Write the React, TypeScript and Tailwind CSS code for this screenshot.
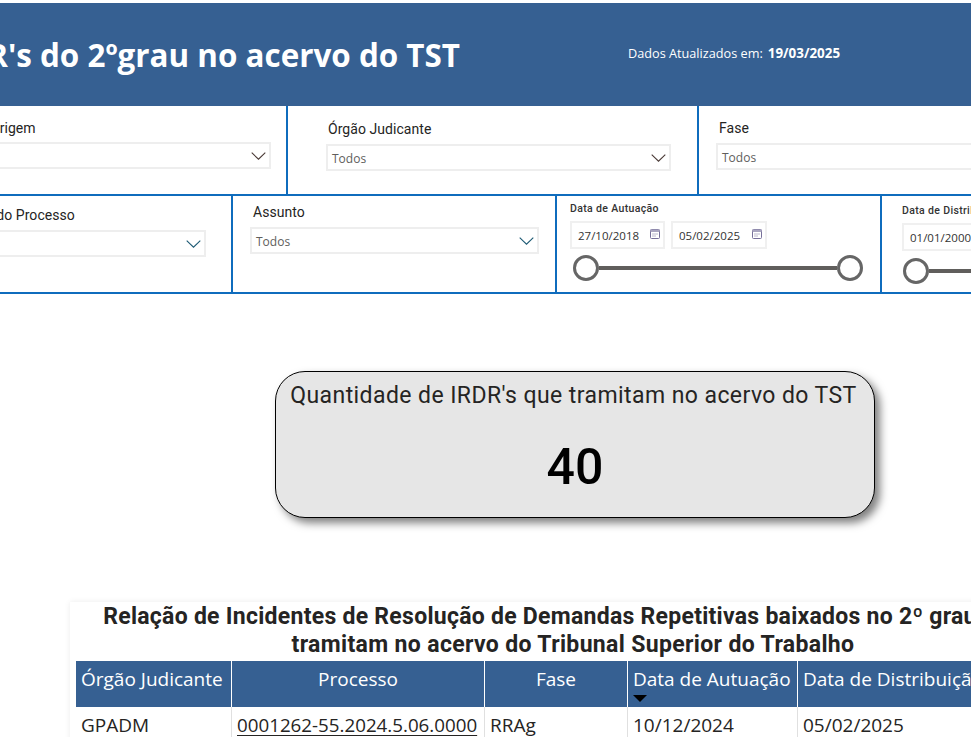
const din = "font-['Roboto',sans-serif]";
const seg = "font-['Open_Sans',sans-serif]";

function Chevron({ color = "#4a3a36" }: { color?: string }) {
  return (
    <svg width="15" height="8" viewBox="0 0 15 8" fill="none" className="shrink-0">
      <path d="M0.7 0.7 L7.5 7.2 L14.3 0.7" stroke={color} strokeWidth="1.1" />
    </svg>
  );
}

function Cal() {
  return (
    <svg width="10" height="10" viewBox="0 0 10 10" fill="none" className="shrink-0 -mt-[3px]">
      <rect x="0.5" y="0.5" width="9" height="9" rx="1" stroke="#77709a" strokeWidth="1" fill="#fff" />
      <rect x="0.5" y="0.5" width="9" height="2.5" fill="#a9a5c0" />
      <path d="M2.5 5h1M4.5 5h1M6.5 5h1M2.5 7h1M4.5 7h1" stroke="#77709a" strokeWidth="1" />
    </svg>
  );
}

function Box({ className = "", text = "Todos", color }: { className?: string; text?: string; color?: string }) {
  return (
    <div className={`h-[27px] border-2 border-[#eeeeee] flex items-center justify-between pl-[4px] pr-[3px] bg-white ${className}`}>
      <span className={`${seg} text-[12px] text-[#605e5c] pt-[3px]`}>{text}</span>
      <Chevron color={color} />
    </div>
  );
}

function DateBox({ value, className = "" }: { value: string; className?: string }) {
  return (
    <div className={`h-[28px] border-2 border-[#f0f0f0] flex items-center justify-between pl-[6px] pr-[3px] bg-white ${className}`}>
      <span className={`${seg} text-[11.5px] text-[#333] whitespace-nowrap pt-[1px]`}>{value}</span>
      <Cal />
    </div>
  );
}

function Thumb() {
  return <div className="w-[26px] h-[26px] rounded-full border-[3px] border-[#666666] bg-white shrink-0" />;
}

const label = `${din} text-[14px] font-normal text-[#252423] tracking-[0.05px] h-[20px] leading-[16px] whitespace-nowrap`;
const small = `${din} text-[10.5px] font-medium text-[#333] tracking-[0.35px] h-[15px] leading-[15px] whitespace-nowrap`;

const headers = [
  { t: "Órgão Judicante", w: "w-[156px]", c: "pl-[5px]" },
  { t: "Processo", w: "w-[253px]", c: "justify-center" },
  { t: "Fase", w: "w-[143px]", c: "justify-center" },
  { t: "Data de Autuação", w: "w-[170px]", c: "pl-[5px]" },
  { t: "Data de Distribuição", w: "w-[200px]", c: "pl-[5px]" },
];

export default function App() {
  return (
    <div className="w-[971px] h-[737px] overflow-hidden bg-white pt-[3px] flex flex-col">
      <header className="h-[103px] bg-[#366092] flex items-center shrink-0">
        <div className="w-[460px] shrink-0 flex justify-end overflow-hidden">
          <h1 className={`${seg} text-[31.4px] font-bold text-white whitespace-nowrap leading-[44px]`}>
            Incidentes de IRDR's do 2ºgrau no acervo do TST
          </h1>
        </div>
        <div className={`${seg} ml-[168px] text-[12.7px] text-white flex gap-[5px] items-center -mt-[2px] whitespace-nowrap`}>
          <span>Dados Atualizados em:</span>
          <span className="font-bold text-[13.4px]">19/03/2025</span>
        </div>
      </header>

      {/* Row 1 */}
      <div className="h-[90px] flex border-b-2 border-[#0f6cbd] shrink-0">
        <div className="w-[288px] shrink-0 border-r-2 border-[#0f6cbd] overflow-hidden pt-[14px]">
          <div className={`${label} -ml-[10px]`}>Origem</div>
          <Box className="w-[281px] mt-[2px] -ml-[10px]" text="" />
        </div>
        <div className="w-[411px] shrink-0 border-r-2 border-[#0f6cbd] pl-[38px] pt-[15px]">
          <div className={`${label} ml-[2px]`}>Órgão Judicante</div>
          <Box className="w-[345px] mt-[3px]" />
        </div>
        <div className="flex-1 pl-[17px] pt-[14px] overflow-hidden">
          <div className={`${label} ml-[3px]`}>Fase</div>
          <Box className="w-[345px] mt-[3px]" />
        </div>
      </div>

      {/* Row 2 */}
      <div className="h-[98px] flex border-b-2 border-[#0f6cbd] shrink-0">
        <div className="w-[233px] shrink-0 border-r-2 border-[#0f6cbd] overflow-hidden pt-[11px]">
          <div className={`${label} -ml-[35px]`}>Tipo do Processo</div>
          <Box className="w-[216px] mt-[3px] -ml-[10px]" text="" color="#1d5a74" />
        </div>
        <div className="w-[324px] shrink-0 border-r-2 border-[#0f6cbd] pl-[17px] pt-[8px]">
          <div className={`${label} ml-[3px]`}>Assunto</div>
          <Box className="w-[289px] mt-[3px]" color="#1d5a74" />
        </div>
        <div className="w-[325px] shrink-0 border-r-2 border-[#0f6cbd] pl-[13px] pt-[5px]">
          <div className={small}>Data de Autuação</div>
          <div className="flex gap-[6px] mt-[5px]">
            <DateBox value="27/10/2018" className="w-[95px]" />
            <DateBox value="05/02/2025" className="w-[96px]" />
          </div>
          <div className="flex items-center mt-[6px] w-[290px] ml-[3px]">
            <Thumb />
            <div className="flex-1 h-[4px] bg-[#605e5c]" />
            <Thumb />
          </div>
        </div>
        <div className="flex-1 pl-[20px] pt-[7px] overflow-hidden">
          <div className={small}>Data de Distribuição</div>
          <DateBox value="01/01/2000" className="w-[95px] mt-[5px]" />
          <div className="flex items-center mt-[7px] w-[281px] ml-[1px]">
            <Thumb />
            <div className="flex-1 h-[4px] bg-[#605e5c]" />
          </div>
        </div>
      </div>

      {/* KPI */}
      <div className="pl-[275px] pt-[77px] shrink-0">
        <div className="w-[600px] h-[147px] rounded-[30px] border border-black bg-[#e6e6e6] shadow-[5px_5px_8px_rgba(0,0,0,0.5)] flex flex-col items-center">
          <div className={`${din} text-[23px] tracking-[0.42px] text-[#252423] mt-[9px] pr-[3px] leading-[30px] whitespace-nowrap`}>
            Quantidade de IRDR's que tramitam no acervo do TST
          </div>
          <div className={`${din} text-[50px] font-medium text-black mt-[28px] leading-[56px]`}>40</div>
        </div>
      </div>

      {/* Table */}
      <div className="ml-[70px] mt-[84px] w-[920px] bg-white pl-[6px] pt-[1px] flex-1 shadow-[0_0_6px_rgba(0,0,0,0.08)]">
        <div className={`${din} font-bold text-[23px] tracking-[0.35px] leading-[28px] text-[#252423] text-center w-[994px] h-[58px]`}>
          <div className="whitespace-nowrap tracking-[0.27px] pr-[21px]">Relação de Incidentes de Resolução de Demandas Repetitivas baixados no 2º grau que</div>
          <div className="whitespace-nowrap">tramitam no acervo do Tribunal Superior do Trabalho</div>
        </div>
        <div className={`${seg} flex h-[46px] bg-[#366092] text-white text-[19px]`}>
          {headers.map((h, i) => (
            <div key={h.t} className={`${h.w} shrink-0 relative flex pt-[4px] whitespace-nowrap overflow-hidden ${h.c} ${i < 4 ? "border-r border-white" : ""}`}>
              <span className="leading-[28px]">{h.t}</span>
              {i === 3 && (
                <svg width="14" height="7" viewBox="0 0 14 7" className="absolute left-[5px] bottom-[5px]">
                  <path d="M0 0h14L7 7z" fill="#000" />
                </svg>
              )}
            </div>
          ))}
        </div>
        <div className={`${seg} flex text-[19px] text-[#252423] h-[40px] whitespace-nowrap`}>
          <div className="w-[156px] shrink-0 pl-[5px] pt-[4px] border-r border-[#e0e0e0]">GPADM</div>
          <div className="w-[253px] shrink-0 pl-[5px] pt-[4px] border-r border-[#e0e0e0] underline underline-offset-[3px] text-[18.75px]">0001262-55.2024.5.06.0000</div>
          <div className="w-[143px] shrink-0 pl-[5px] pt-[4px] border-r border-[#e0e0e0]">RRAg</div>
          <div className="w-[170px] shrink-0 pl-[5px] pt-[4px] border-r border-[#e0e0e0]">10/12/2024</div>
          <div className="w-[200px] shrink-0 pl-[5px] pt-[4px]">05/02/2025</div>
        </div>
      </div>
    </div>
  );
}
